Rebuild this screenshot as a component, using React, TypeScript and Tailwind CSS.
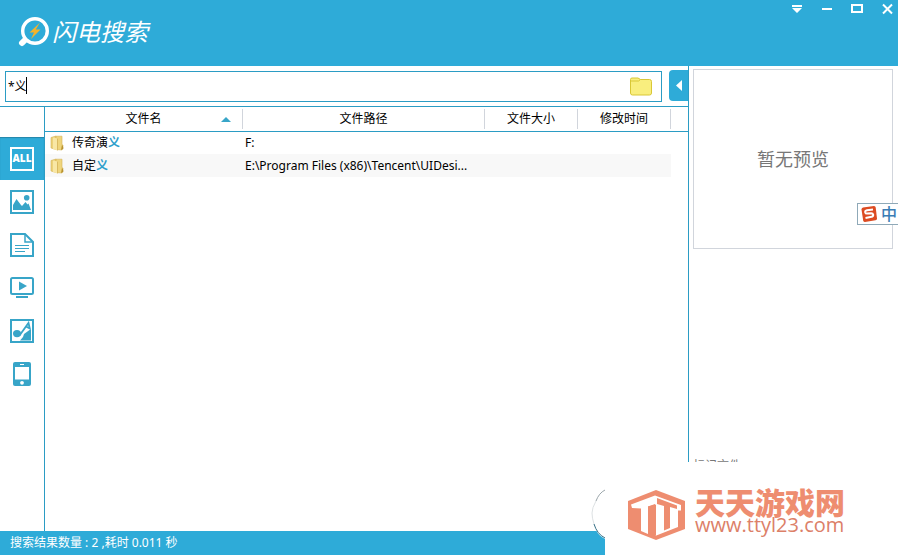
import React from "react";

const FileIcon: React.FC = () => (
  <svg width="14" height="16" viewBox="0 0 14 16" aria-hidden="true">
    <path d="M1 2.5 6 1v13.5L1 13z" fill="#ecd27a" stroke="#d3b154" strokeWidth=".6" />
    <path d="M6 1.2h6v8l1 1.2-1 4.6-6-.5z" fill="#efd57c" stroke="#d3b154" strokeWidth=".6" />
    <path d="M3 2.5 7.5 3.6v11.8L3 14z" fill="#f8e7a5" />
    <path d="M7.5 3.6v11.8" stroke="#d3b154" strokeWidth=".8" />
    <path d="M12 9.5 13.3 12v2L11 15z" fill="#b8922f" />
  </svg>
);

const ImageIcon: React.FC = () => (
  <svg width="24" height="24" viewBox="0 0 24 24" aria-hidden="true">
    <rect x="1" y="1" width="22" height="22" fill="none" stroke="#38a5c8" strokeWidth="2" />
    <path d="M3 20v-5l3.5-6L11 15l1 1 3.5-4 2 2.5 1-1L21 20z" fill="#38a5c8" />
    <circle cx="16.7" cy="7.8" r="2.8" fill="#38a5c8" />
  </svg>
);

const DocIcon: React.FC = () => (
  <svg width="24" height="24" viewBox="0 0 24 24" fill="none" stroke="#38a5c8" aria-hidden="true">
    <path d="M1 1h14l8 8v14H1z" strokeWidth="2" />
    <path d="M15 1v8h8" strokeWidth="1.5" />
    <path d="M5 12.5h14M5 15.5h14M5 18.5h10" />
  </svg>
);

const VideoIcon: React.FC = () => (
  <svg width="24" height="24" viewBox="0 0 24 24" aria-hidden="true">
    <rect x="1" y="2" width="22" height="16" rx="1.5" fill="none" stroke="#38a5c8" strokeWidth="2" />
    <path d="M9 5.5 17 10l-8 4.5z" fill="#38a5c8" />
    <path d="M6 20h12v2H6z" fill="#38a5c8" />
  </svg>
);

const MusicIcon: React.FC = () => (
  <svg width="24" height="24" viewBox="0 0 24 24" aria-hidden="true">
    <rect x="1" y="1" width="22" height="22" fill="none" stroke="#38a5c8" strokeWidth="2" />
    <ellipse cx="7" cy="14.6" rx="4" ry="3.6" fill="#38a5c8" />
    <path d="M9.5 16.5 18.5 4l1.3 5.5-3.3-1.8" fill="none" stroke="#38a5c8" strokeWidth="1.8" />
    <path d="M10 21.5 13 18l1-3 5.5-4H21v10.5z" fill="#38a5c8" />
  </svg>
);

const PhoneIcon: React.FC = () => (
  <svg width="24" height="24" viewBox="0 0 24 24" aria-hidden="true">
    <rect x="3" y="0" width="18" height="24" rx="2" fill="#38a5c8" />
    <path d="M5 5h14v12.5H5z" fill="#fff" />
    <path d="M10 2h4v1h-4z" fill="#fff" />
    <circle cx="12" cy="20.8" r="1.9" fill="#fff" />
  </svg>
);

const categories = [
  { label: "图片", icon: <ImageIcon /> },
  { label: "文档", icon: <DocIcon /> },
  { label: "视频", icon: <VideoIcon /> },
  { label: "音乐", icon: <MusicIcon /> },
  { label: "手机", icon: <PhoneIcon /> },
];

const files = [
  { name: "传奇演", match: "义", path: "F:" },
  { name: "自定", match: "义", path: "E:\\Program Files (x86)\\Tencent\\UIDesi..." },
];

const Header: React.FC = () => (
  <header className="flex h-[66px] shrink-0 items-start justify-between bg-[#2eabd8] text-white">
    <div className="flex items-center pt-4 pl-[18px]">
      <svg width="32" height="32" viewBox="0 0 32 32" aria-hidden="true">
        <path d="m7 24-3 3" stroke="#fff" strokeWidth="6" strokeLinecap="round" />
        <circle cx="17" cy="15" r="12.3" fill="#2eabd8" stroke="#fff" strokeWidth="3.4" />
        <path d="M22 6.5 11.5 16.5h4.5L13 23l9.5-9.5h-4.7z" fill="#f3b32b" />
      </svg>
      <h1 className="pl-[2px] text-2xl leading-8 italic">闪电搜索</h1>
    </div>
    <div className="flex gap-3 pt-[1px] pr-[2px]">
      <button aria-label="菜单">
        <svg width="18" height="16" viewBox="0 0 18 16" fill="#fff">
          <path d="M4 4h10v2H4zM4 7h10l-5 5z" />
        </svg>
      </button>
      <button aria-label="最小化">
        <svg width="18" height="16" viewBox="0 0 18 16" fill="#fff">
          <path d="M4 7h10v2H4z" />
        </svg>
      </button>
      <button aria-label="最大化">
        <svg width="18" height="16" viewBox="0 0 18 16" fill="none" stroke="#fff" strokeWidth="2">
          <path d="M4 4h10v7H4z" />
        </svg>
      </button>
      <button aria-label="关闭">
        <svg width="18" height="16" viewBox="0 0 18 16" fill="none" stroke="#fff" strokeWidth="2">
          <path d="m5 3.5 9 9m0-9-9 9" />
        </svg>
      </button>
    </div>
  </header>
);

const SearchBar: React.FC = () => (
  <div className="flex pt-1 pb-1 pl-[5px]">
    <div className="relative mt-[1px] flex h-[31px] flex-1 items-start border border-[#2b9cc4] pr-2">
      <input
        aria-label="搜索"
        defaultValue="*义"
        className="h-[28px] min-w-0 flex-1 pl-[2px] text-xs text-black outline-none"
      />
      {/* Caret */}
      <span className="absolute top-[5px] left-5 h-[17px] w-px bg-black" />
      <button aria-label="选择文件夹" className="pt-1">
        <svg width="24" height="22" viewBox="0 0 24 22">
          <path d="M1.5 3.5q0-1.5 1.5-1.5h6l2.5 1.5h9q2 0 2 2v11.5q0 2-2 2h-17q-2 0-2-2z" fill="#f9ee7e" stroke="#d9c736" />
          <path d="M1.5 5h8l2-1.5" fill="none" stroke="#d9c736" />
        </svg>
      </button>
    </div>
    <button aria-label="收起预览" className="ml-[7px] flex h-[31px] w-[19px] items-center justify-center rounded-l bg-[#2eabd8]">
      <svg width="6" height="12" viewBox="0 0 6 12" fill="#fff">
        <path d="M6 0v11L0 5.5z" />
      </svg>
    </button>
  </div>
);

const Sidebar: React.FC = () => (
  <nav className="w-[45px] shrink-0 border-r border-[#2b9cc4] pt-[30px]">
    <button className="flex h-[43px] w-full items-center justify-center bg-[#2eabd8] shadow-[inset_0_1px_1px_#2585a9]">
      <span className="flex size-6 items-center justify-center border-2 border-white font-['Open_Sans'] text-[10px] font-extrabold text-white">
        ALL
      </span>
    </button>
    {categories.map((item) => (
      <button key={item.label} aria-label={item.label} className="flex h-[43px] w-full items-center justify-center">
        {item.icon}
      </button>
    ))}
  </nav>
);

const FileTable: React.FC = () => (
  <div className="min-w-0 flex-1">
    <table className="w-full table-fixed border-collapse text-xs text-black">
      <colgroup>
        <col />
        <col className="w-[242px]" />
        <col className="w-[93px]" />
        <col className="w-[93px]" />
        <col className="w-[17px]" />
      </colgroup>
      <thead>
        <tr className="h-6 border-b border-[#2b9cc4]">
          <th className="p-0 font-normal">
            <div className="relative border-r border-gray-300 leading-5">
              文件名
              <svg width="10" height="5" viewBox="0 0 10 5" className="absolute top-2 right-[11px]" aria-hidden="true">
                <path d="M5 0l5 5H0z" fill="#38a5c8" />
              </svg>
            </div>
          </th>
          <th className="p-0 font-normal">
            <div className="border-r border-gray-300 leading-5">文件路径</div>
          </th>
          <th className="p-0 font-normal">
            <div className="border-r border-gray-300 leading-5">文件大小</div>
          </th>
          <th className="p-0 font-normal">
            <div className="border-r border-gray-300 leading-5">修改时间</div>
          </th>
          <th className="p-0" />
        </tr>
      </thead>
      <tbody>
        {files.map((file) => (
          <tr key={file.path} className="group h-[23px]">
            <td className="p-0 group-even:bg-[#f8f8f8]">
              <div className="flex items-center gap-2 pl-[5px]">
                <FileIcon />
                <span>
                  {file.name}
                  <span className="font-bold text-[#2fa0cc]">{file.match}</span>
                </span>
              </div>
            </td>
            <td className="truncate p-0 pl-[2px] group-even:bg-[#f8f8f8]">{file.path}</td>
            <td className="p-0 group-even:bg-[#f8f8f8]" />
            <td className="p-0 group-even:bg-[#f8f8f8]" />
            <td className="p-0" />
          </tr>
        ))}
      </tbody>
    </table>
  </div>
);

const Preview: React.FC = () => (
  <aside className="flex w-[210px] shrink-0 flex-col justify-between border-l border-[#2b9cc4] pt-[3px] pr-[5px] pb-[57px] pl-1">
    <div className="relative flex h-[180px] items-center justify-center border border-gray-300 text-lg text-[#777]">
      暂无预览
      <div className="absolute top-[133px] -right-[6px] flex h-[22px] w-[41px] items-center gap-[3px] border border-r-0 border-[#8fa9b8] bg-white pl-[2px]">
        <svg width="18" height="18" viewBox="0 0 18 18" className="shrink-0" aria-hidden="true">
          <path d="M3 2.5 14 1q1.5 0 1.7 1.5l1.3 11q0 1.5-1.5 1.8L5 17q-1.5 0-1.8-1.5L1.5 4.5Q1.5 3 3 2.5z" fill="#dc4b22" />
          <path d="M13 4.5 7 5.2q-2 .4-1.8 2 .3 1.5 2 1.4l4-.3q1.7 0 2 1.5.1 1.7-1.7 2L5.5 13" fill="none" stroke="#fff" strokeWidth="2" />
        </svg>
        <span className="text-base leading-5 font-medium text-[#3a7db5]">中</span>
      </div>
    </div>
    <p className="text-xs leading-4 text-[#777]">标记文件</p>
  </aside>
);

const SiteBadge: React.FC = () => (
  <div className="absolute right-0 bottom-0 flex h-[93px] w-[293px] items-center gap-2 bg-white pt-3 pl-[22px]">
    <svg width="60" height="52" viewBox="0 0 60 52" className="shrink-0" aria-hidden="true">
      <path d="M29 1 58 12v28L29 51 1 40V12z" fill="#ee8d70" />
      <path d="M4 15.5 28 6.5v8.5l-7 2.5V45l-7-3V19.5L5 19z" fill="#fff" />
      <path d="M28 6.5 54 16v5.5h-3V38L28 47z" fill="#fff" />
      <path d="M30 9 50 16.5V20l-7-2v21l-6 2.5V17l-7-2z" fill="#ee8d70" />
      <path d="M21 17.5 29 15.5V47l-8-3z" fill="#ee8d70" />
    </svg>
    <div className="pb-2">
      <p className="text-[30px] leading-7 font-black text-[#ee8d70]">天天游戏网</p>
      <p className="font-['Open_Sans'] text-xl leading-4 text-[#dc8068]">www.ttyl23.com</p>
    </div>
    <svg width="14" height="50" viewBox="0 0 14 50" className="absolute bottom-4 -left-[14px]" aria-hidden="true">
      <path d="M14 0Q0 6 1 25t13 25z" fill="#fff" />
      <path d="M14 1Q8 4 5 12" fill="none" stroke="#9aa5aa" />
      <path d="M5 12Q1 19 1 24t2 11" fill="none" stroke="#dde1e3" />
      <path d="M3 35q3 10 11 14" fill="none" stroke="#356f86" />
    </svg>
  </div>
);

const App: React.FC = () => {
  return (
    <div className="relative flex h-screen flex-col overflow-hidden bg-white font-['Noto_Sans','Noto_Sans_CJK_SC',sans-serif]">
      <Header />
      <main className="flex min-h-0 flex-1">
        <section className="flex min-w-0 flex-1 flex-col">
          <SearchBar />
          <div className="flex flex-1 border-t border-[#2b9cc4]">
            <Sidebar />
            <FileTable />
          </div>
        </section>
        <Preview />
      </main>
      <footer className="flex h-6 shrink-0 items-center bg-[#2eabd8] pl-[10px] text-xs text-white">
        搜索结果数量 : 2 ,耗时 0.011 秒
      </footer>
      <SiteBadge />
    </div>
  );
};

export default App;
